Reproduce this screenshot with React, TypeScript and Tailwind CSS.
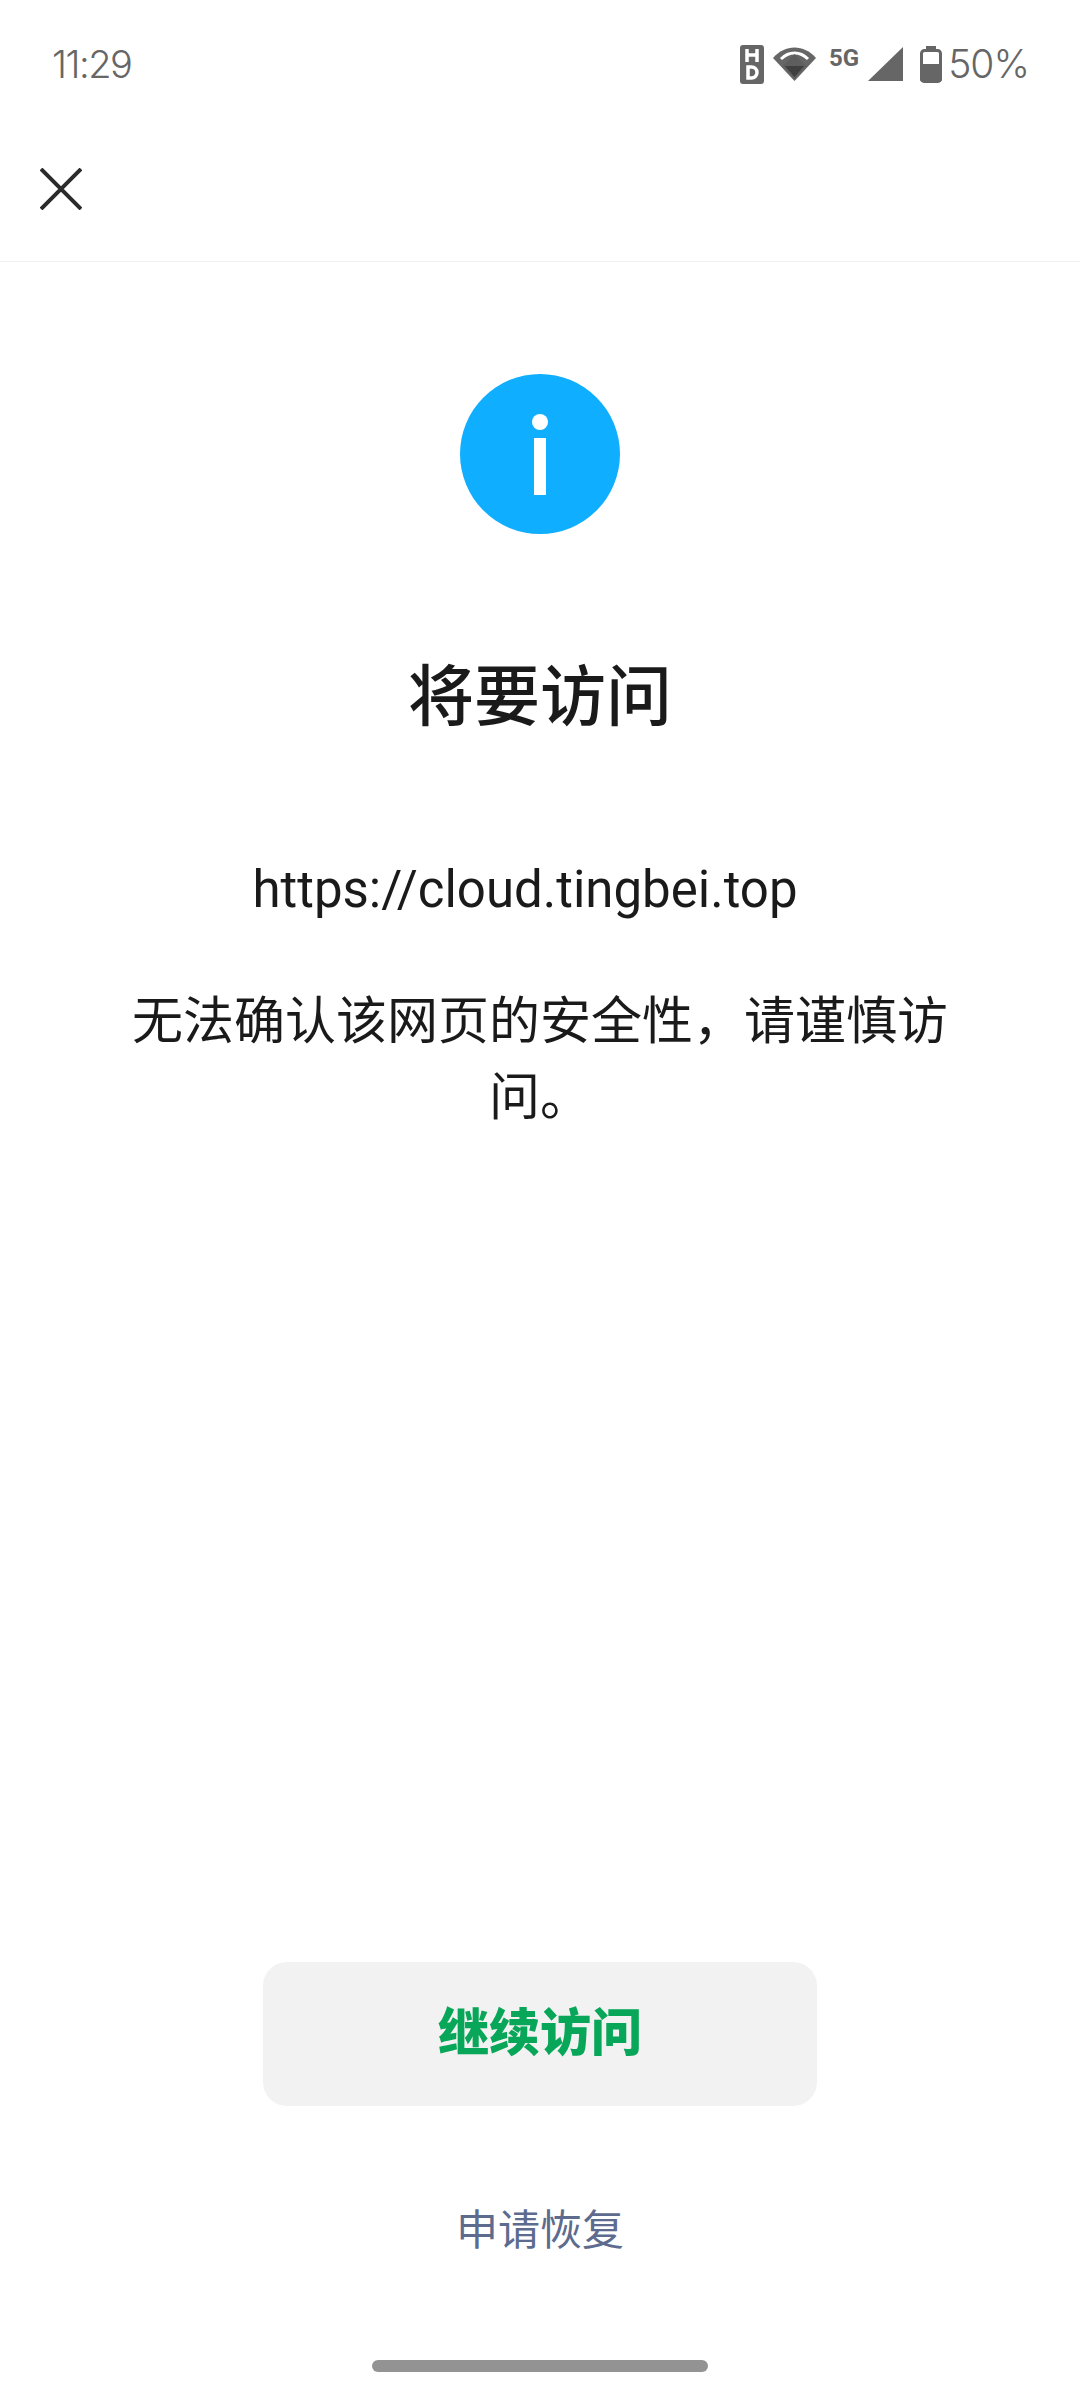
export default function App() {
  const cjk = { fontFamily: '"Roboto", "Noto Sans CJK SC", sans-serif' };
  return (
    <div className="w-[1080px] h-[2400px] bg-white flex flex-col items-center overflow-hidden" style={cjk}>
      <div className="w-full h-[128px] shrink-0 flex items-center justify-between pl-[52px] pr-[51px] text-[#666666]">
        <span className="text-[38px] font-light tracking-[-1.5px]" style={{ fontFamily: '"Inter", sans-serif' }}>11:29</span>
        <div className="flex items-center gap-[6px]">
          <svg width="202" height="44" viewBox="0 0 202 44">
            <rect x="0" y="3" width="24" height="39" rx="3" fill="#666" />
            <path d="M7 7v13M17 7v13M7 13h10" stroke="#fff" strokeWidth="3.5" fill="none" />
            <path d="M8 25h3.500a5.500 5.500 0 0 1 0 11H8z" stroke="#fff" strokeWidth="3.500" fill="none" />
            <path d="M33 16C45 2 64 2 76 16L54.500 39z" fill="#666" />
            <path d="M41 17C49 9 60 9 68 17" stroke="#fff" strokeWidth="3" fill="none" />
            <path d="M54.500 12L66 24 54.500 37 43 24z" fill="#5e5e5e" />
            <path d="M45 24H64L54.500 35z" fill="#3f3f3f" />
            <text x="89" y="24" fontSize="24" fontWeight="700" fill="#666" fontFamily="Roboto, sans-serif">5G</text>
            <path d="M128 39L163 5V39z" fill="#666" />
            <rect x="186" y="4" width="10" height="4" fill="#666" />
            <rect x="181.500" y="8.500" width="19" height="31" rx="3" fill="#fff" stroke="#666" strokeWidth="3" />
            <rect x="180" y="22" width="22" height="18" rx="3" fill="#666" />
          </svg>
          <span className="text-[39px] font-light tracking-[-1px]" style={{ fontFamily: '"Inter", sans-serif' }}>50%</span>
        </div>
      </div>
      <div className="w-full h-[134px] shrink-0 flex items-center pl-[40px] pb-[12px] border-b border-[#f0f0f0]">
        <svg width="42" height="42" viewBox="0 0 42 42">
          <path d="M1 1L41 41M41 1L1 41" stroke="#2b2b2b" strokeWidth="4" fill="none" />
        </svg>
      </div>
      <div className="mt-[112px] w-[160px] h-[160px] rounded-full bg-[#10aeff] relative shrink-0">
        <div className="absolute left-[72px] top-[40px] w-[16px] h-[16px] rounded-full bg-white" />
        <div className="absolute left-[74px] top-[64px] w-[12px] h-[57px] bg-white" />
      </div>
      <h1 className="mt-[120px] text-[66px] leading-[88px] font-medium text-[#1a1a1a]">将要访问</h1>
      <p className="mt-[110px] pr-[30px] text-[51px] leading-[76px] text-[#1a1a1a]">https://cloud.tingbei.top</p>
      <p className="mt-[56px] w-[820px] text-center text-[51px] leading-[76px] text-[#1a1a1a]">无法确认该网页的安全性，请谨慎访问。</p>
      <div className="flex-1" />
      <button className="w-[554px] h-[144px] rounded-[24px] bg-[#f2f2f2] text-[#07a658] text-[51px] font-black">继续访问</button>
      <span className="mt-[95px] text-[42px] leading-[60px] text-[#5d6b8e]">申请恢复</span>
      <div className="mt-[99px] mb-[28px] w-[336px] h-[12px] rounded-full bg-[#939393]" />
    </div>
  );
}
